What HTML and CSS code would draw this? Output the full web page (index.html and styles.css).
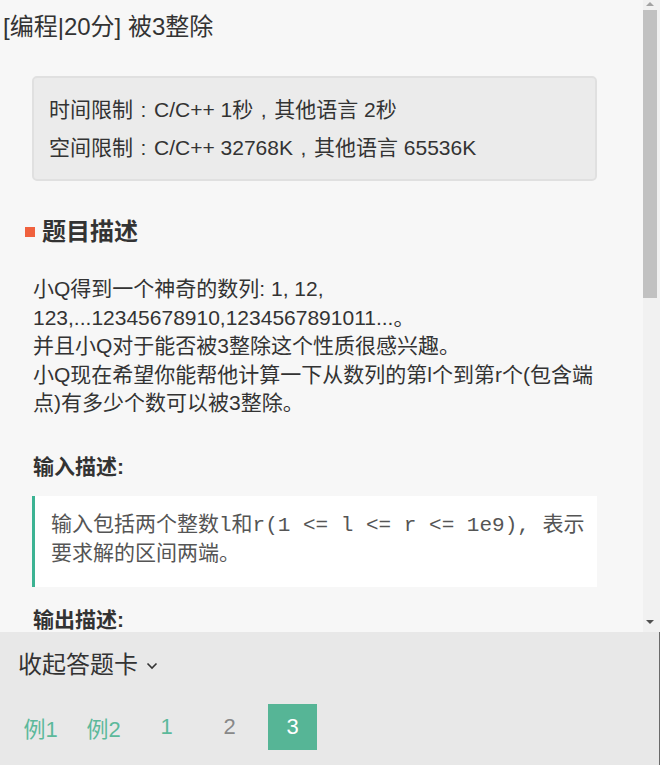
FILE: index.html
```html
<!DOCTYPE html>
<html lang="zh-CN">
<head>
<meta charset="utf-8">
<title>被3整除</title>
<link rel="stylesheet" href="styles.css">
</head>
<body>
<div class="page">
  <div class="content">
    <div class="article">
      <h1 class="title">[编程|20分] 被3整除</h1>
      <div class="limits">
        <p>时间限制<span class="punc">:</span>C/C++ 1秒<span class="punc">,</span>其他语言 2秒</p>
        <p>空间限制<span class="punc">:</span>C/C++ 32768K<span class="punc">,</span>其他语言 65536K</p>
      </div>
      <h2 class="section"><span class="mark"></span>题目描述</h2>
      <p class="desc">小Q得到一个神奇的数列: 1, 12, 123,...12345678910,1234567891011...。<br>并且小Q对于能否被3整除这个性质很感兴趣。<br>小Q现在希望你能帮他计算一下从数列的第l个到第r个(包含端点)有多少个数可以被3整除。</p>
      <h3 class="sub">输入描述:</h3>
      <div class="quote">输入包括两个整数l和r(1 &lt;= l &lt;= r &lt;= 1e9), 表示<br>要求解的区间两端。</div>
      <h3 class="sub">输出描述:</h3>
    </div>
    <div class="scrollbar">
      <div class="sb-btn sb-up"><span class="arrow-up"></span></div>
      <div class="sb-track"><div class="sb-thumb"></div></div>
      <div class="sb-btn sb-down"><span class="arrow-down"></span></div>
    </div>
  </div>
  <div class="panel">
    <div class="toggle">收起答题卡
      <svg class="chev" width="12" height="8" viewBox="0 0 12 8"><polyline points="1.5,1.5 6,6 10.5,1.5" fill="none" stroke="#333" stroke-width="1.6"/></svg>
    </div>
    <div class="tabs">
      <div class="tab">例1</div>
      <div class="tab">例2</div>
      <div class="tab">1</div>
      <div class="tab plain">2</div>
      <div class="tab active">3</div>
    </div>
  </div>
</div>
</body>
</html>
```

FILE: styles.css
```css
* { box-sizing: border-box; }
html, body { margin: 0; padding: 0; }
body {
  width: 660px;
  height: 765px;
  overflow: hidden;
  background: #f7f7f7;
  font-family: "Liberation Sans", "Noto Sans CJK SC", sans-serif;
  color: #333;
}
.page { display: flex; flex-direction: column; height: 765px; }
.content { height: 632px; flex: none; display: flex; }

.article { flex: 1; min-width: 0; overflow: hidden; padding-top: 11px; }

.scrollbar {
  width: 17px;
  flex: none;
  display: flex;
  flex-direction: column;
  background: #f1f1f1;
}
.sb-btn { flex: none; display: flex; justify-content: center; padding-right: 3px; }
.sb-up { height: 10px; align-items: flex-start; padding-top: 2px; }
.sb-down { height: 18px; align-items: flex-start; padding-top: 6px; }
.arrow-up {
  width: 0; height: 0;
  border-left: 4px solid transparent;
  border-right: 4px solid transparent;
  border-bottom: 4px solid #a3a3a3;
}
.arrow-down {
  width: 0; height: 0;
  border-left: 4px solid transparent;
  border-right: 4px solid transparent;
  border-top: 4px solid #505050;
}
.sb-track { flex: 1; padding-right: 3px; }
.sb-thumb { height: 288px; background: #c1c1c1; }

.title {
  margin: 0;
  padding-left: 3px;
  font-size: 24px;
  line-height: 32px;
  font-weight: normal;
}
.limits {
  margin: 33px 0 0 32px;
  width: 565px;
  background: #ebebeb;
  border: 2px solid #e0e0e0;
  border-radius: 5px;
  padding: 13px 15px 12px;
}
.limits p { margin: 0; font-size: 21px; line-height: 38px; }
.punc { display: inline-block; width: 1em; text-align: center; line-height: 1; }
.section {
  margin: 35px 0 0 25px;
  display: flex;
  align-items: center;
  gap: 7px;
  font-size: 24px;
  line-height: 32px;
  font-weight: bold;
}
.mark { width: 10px; height: 10px; background: #f0613e; flex: none; }
.desc {
  margin: 27px 0 0 33px;
  width: 564px;
  font-size: 21px;
  line-height: 28.5px;
}
.sub {
  margin: 35px 0 0 33px;
  font-size: 21px;
  line-height: 28.5px;
  font-weight: bold;
}
.quote + .sub { margin-top: 19px; }
.quote {
  margin: 15px 0 0 32px;
  width: 565px;
  background: #fff;
  border-left: 3px solid #3cb393;
  padding: 14.5px 6px 18.5px 16px;
  font-family: "Liberation Mono", "Noto Sans CJK SC", monospace;
  font-size: 21px;
  line-height: 29px;
  color: #555;
}

.panel {
  height: 133px;
  flex: none;
  background: #e8e8e8;
  border-right: 1px solid #6a6a6a;
  padding-top: 17px;
}
.toggle {
  display: flex;
  align-items: center;
  gap: 8px;
  padding-left: 18px;
  font-size: 24px;
  line-height: 32px;
  color: #333;
}
.chev { display: block; margin-top: 2px; }
.tabs { display: flex; gap: 14px; padding-left: 16px; margin-top: 23px; }
.tab {
  width: 49px;
  height: 46px;
  display: flex;
  align-items: center;
  justify-content: center;
  font-size: 22px;
  color: #5cb99b;
}
.tab.plain { color: #888; }
.tab.active { background: #56b596; color: #fff; }
```
